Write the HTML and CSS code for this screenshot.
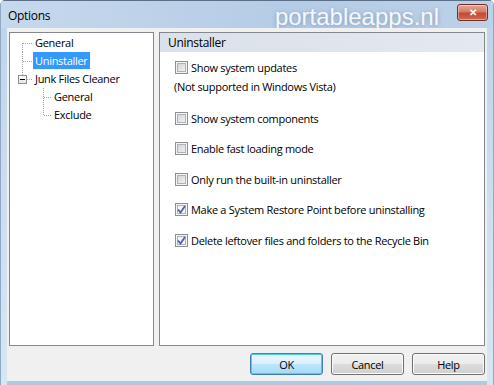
FILE: index.html
```html
<!DOCTYPE html>
<html lang="en">
<head>
    <meta charset="UTF-8">
    <title>Options</title>
    <link rel="stylesheet" href="styles.css">
</head>
<body>
    <div class="window">
        <div class="titlebar">
            <span class="title">Options</span>
            <span class="watermark">portableapps.nl</span>
            <button class="close">&#x2715;</button>
        </div>
        <div class="client">
            <div class="panels">
                <div class="panel tree">
                    <div class="node first"><span class="conn"></span><span class="label">General</span></div>
                    <div class="node"><span class="conn"></span><span class="label selected">Uninstaller</span></div>
                    <div class="node last"><span class="conn"><span class="expander"><span class="minus"></span></span></span><span class="label">Junk Files Cleaner</span></div>
                    <div class="node child"><span class="indent"></span><span class="conn"></span><span class="label">General</span></div>
                    <div class="node child last"><span class="indent"></span><span class="conn"></span><span class="label">Exclude</span></div>
                </div>
                <div class="panel page">
                    <div class="page-header">Uninstaller</div>
                    <div class="options">
                        <div class="group">
                            <label class="option"><span class="check"></span>Show system updates</label>
                            <div class="note">(Not supported in Windows Vista)</div>
                        </div>
                        <label class="option"><span class="check"></span>Show system components</label>
                        <label class="option"><span class="check"></span>Enable fast loading mode</label>
                        <label class="option"><span class="check"></span>Only run the built-in uninstaller</label>
                        <label class="option"><span class="check checked"><svg width="9" height="9" viewBox="0 0 9 9"><path d="M1 4.5 L3.5 7.5 L8 1" fill="none" stroke="#4f63a0" stroke-width="1.8"/></svg></span>Make a System Restore Point before uninstalling</label>
                        <label class="option"><span class="check checked"><svg width="9" height="9" viewBox="0 0 9 9"><path d="M1 4.5 L3.5 7.5 L8 1" fill="none" stroke="#4f63a0" stroke-width="1.8"/></svg></span>Delete leftover files and folders to the Recycle Bin</label>
                    </div>
                </div>
            </div>
            <div class="footer">
                <button class="btn default">OK</button>
                <button class="btn">Cancel</button>
                <button class="btn">Help</button>
            </div>
        </div>
    </div>
</body>
</html>
```

FILE: styles.css
```css
html, body {
    margin: 0;
    padding: 0;
}
body {
    font-family: "Open Sans", "Liberation Sans", sans-serif;
    font-size: 11px;
    letter-spacing: -0.3px;
    color: #000;
    background: #fff;
}
.window {
    width: 494px;
    height: 385px;
    box-sizing: border-box;
    display: flex;
    flex-direction: column;
    background: linear-gradient(#bdd3ea, #c9dcef 40%, #d6e6f4);
    border-left: 1px solid #8fa8c4;
    border-right: 1px solid #8fa8c4;
    border-top: 1px solid #5b6f88;
    border-radius: 5px 5px 0 0;
}
.titlebar {
    height: 27px;
    display: flex;
    align-items: flex-start;
    padding-left: 7px;
    padding-right: 5px;
    background: linear-gradient(to right, #c6d8ec, #b5cce6 60%, #bcd1e8);
}
.title {
    font-size: 12px;
    margin-top: 6px;
}
.watermark {
    margin-left: auto;
    margin-top: 2px;
    margin-right: 18px;
    font-family: "Liberation Sans", sans-serif;
    font-size: 24px;
    letter-spacing: 0;
    color: #f4f7fb;
    text-shadow: 0 1px 4px rgba(110, 125, 150, 0.7);
}
.close {
    margin-top: 3px;
    width: 31px;
    height: 17px;
    padding: 0;
    border: 1px solid #6e3026;
    border-radius: 3px;
    background: linear-gradient(#e6a899, #d77a66 45%, #c24a35 55%, #d06a50);
    color: #fff;
    font-size: 10px;
    font-weight: bold;
    line-height: 14px;
    box-shadow: inset 0 0 0 1px rgba(255, 255, 255, 0.4);
}
.client {
    flex: 1;
    margin: 0 6px 0 6px;
    background: #f0f0f0;
    border-bottom: 4px solid #a8cbe6;
    display: flex;
    flex-direction: column;
    padding: 4px 2px 0 2px;
}
.panels {
    display: flex;
    gap: 5px;
    height: 314px;
}
.panel {
    background: #fff;
    border: 1px solid #828790;
    box-sizing: border-box;
}
.tree {
    width: 145px;
    padding: 1px 0 0 8px;
}
.page {
    flex: 1;
}

/* tree */
.node {
    display: flex;
    height: 18px;
}
.indent {
    width: 20px;
}
.conn {
    width: 15px;
    display: flex;
    align-items: center;
    background:
        repeating-linear-gradient(to right, #a0a0a0 0 1px, transparent 1px 2px) 5px 9px / 10px 1px no-repeat,
        repeating-linear-gradient(to bottom, #a0a0a0 0 1px, transparent 1px 2px) 4px 0 / 1px 100% no-repeat;
}
.child .conn {
    width: 14px;
    background:
        repeating-linear-gradient(to right, #a0a0a0 0 1px, transparent 1px 2px) 6px 9px / 8px 1px no-repeat,
        repeating-linear-gradient(to bottom, #a0a0a0 0 1px, transparent 1px 2px) 5px 0 / 1px 100% no-repeat;
}
.first .conn {
    background:
        repeating-linear-gradient(to right, #a0a0a0 0 1px, transparent 1px 2px) 5px 9px / 10px 1px no-repeat,
        repeating-linear-gradient(to bottom, #a0a0a0 0 1px, transparent 1px 2px) 4px 9px / 1px 9px no-repeat;
}
.last .conn {
    background:
        repeating-linear-gradient(to right, #a0a0a0 0 1px, transparent 1px 2px) 5px 9px / 10px 1px no-repeat,
        repeating-linear-gradient(to bottom, #a0a0a0 0 1px, transparent 1px 2px) 4px 0 / 1px 9px no-repeat;
}
.child.last .conn {
    background:
        repeating-linear-gradient(to right, #a0a0a0 0 1px, transparent 1px 2px) 6px 9px / 8px 1px no-repeat,
        repeating-linear-gradient(to bottom, #a0a0a0 0 1px, transparent 1px 2px) 5px 0 / 1px 10px no-repeat;
}
.expander {
    width: 9px;
    height: 9px;
    box-sizing: border-box;
    border: 1px solid #919191;
    background: linear-gradient(#fff, #e4e4e4);
    display: flex;
    align-items: center;
    justify-content: center;
    margin-top: 1px;
}
.minus {
    width: 5px;
    height: 1px;
    background: #000;
}
.label {
    padding: 0 2px;
    height: 17px;
    line-height: 17px;
    white-space: nowrap;
}
.selected {
    background: #3399ff;
    color: #fff;
}

/* page */
.page-header {
    height: 19px;
    line-height: 19px;
    padding-left: 8px;
    font-size: 12px;
    background: linear-gradient(to right, #d9e1ea, #e4e9ef);
}
.options {
    display: flex;
    flex-direction: column;
    gap: 17.5px;
    padding: 9px 0 0 15px;
}
.option {
    display: flex;
    align-items: center;
    gap: 3px;
    height: 13px;
    white-space: nowrap;
}
.check {
    width: 13px;
    height: 13px;
    box-sizing: border-box;
    border: 1px solid #8e8f8f;
    background: #f4f4f4;
    display: flex;
    align-items: center;
    justify-content: center;
    box-shadow: inset 0 0 0 1px #f4f4f4, inset 0 0 0 2px #aeb3b9;
}
.check:not(.checked) {
    background: linear-gradient(135deg, #cbcfd5, #f6f6f6);
}
.note {
    margin-top: 5px;
    margin-left: -1px;
    height: 15px;
    line-height: 15px;
}

/* footer */
.footer {
    display: flex;
    justify-content: flex-end;
    gap: 8px;
    margin-top: 7px;
}
.btn {
    width: 73px;
    height: 22px;
    padding: 0;
    font-family: inherit;
    font-size: 11px;
    letter-spacing: inherit;
    color: #000;
    border: 1px solid #707070;
    border-radius: 3px;
    background: linear-gradient(#f2f2f2, #ebebeb 50%, #dddddd 50%, #cfcfcf);
    box-shadow: inset 0 0 0 1px #fbfbfb;
}
.btn.default {
    border-color: #3c7fb1;
    box-shadow: inset 0 0 0 1px #48d0f4;
    background: linear-gradient(#eaf6fd, #d9f0fc 50%, #bee6fd 50%, #a7d9f5);
}
```
